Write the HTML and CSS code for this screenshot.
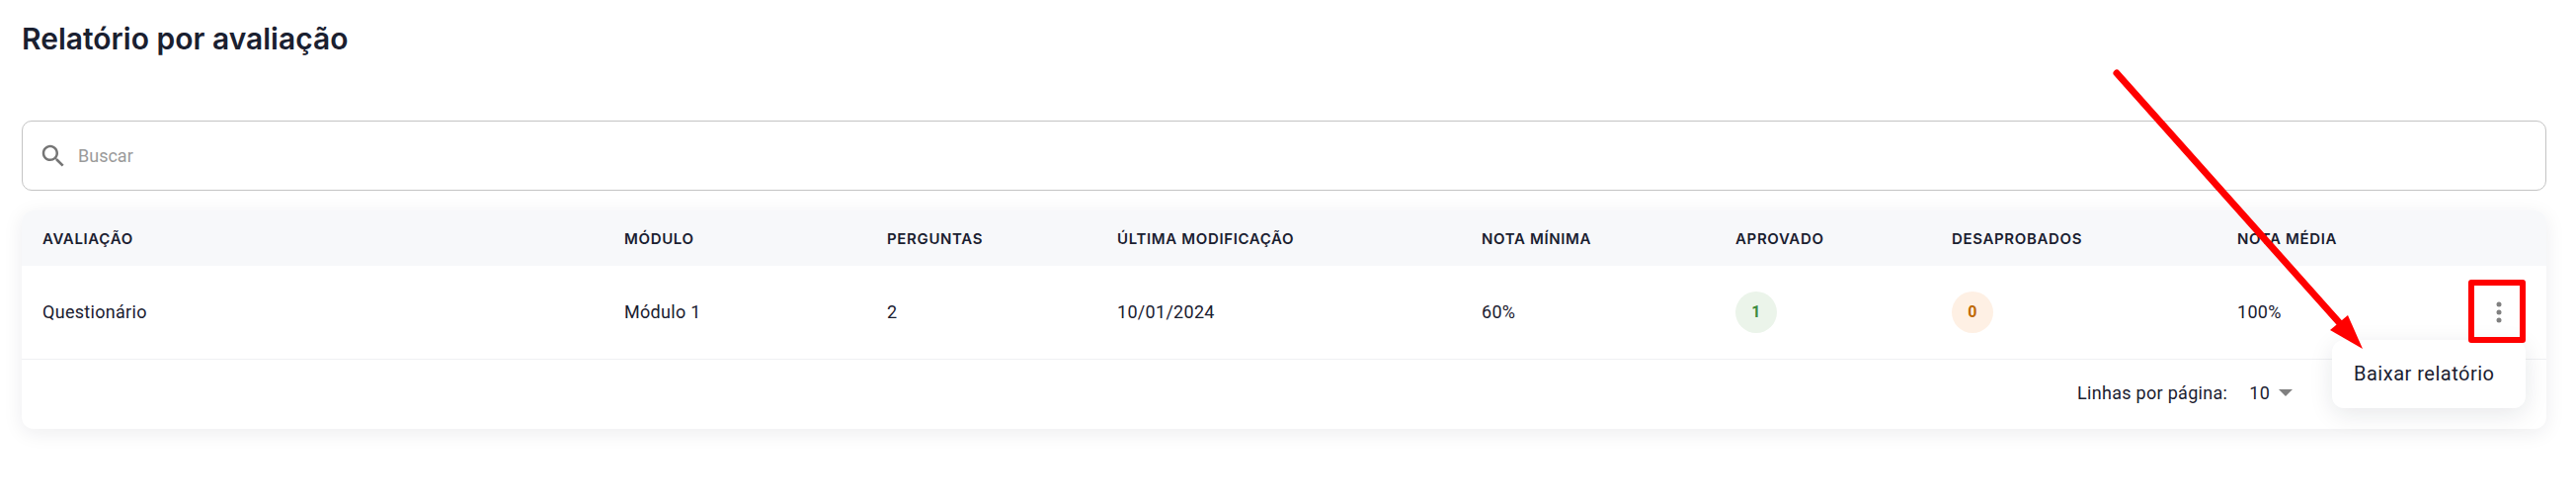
FILE: index.html
```html
<!DOCTYPE html>
<html lang="pt-br">
<head>
    <meta charset="UTF-8">
    <meta name="viewport" content="width=device-width, initial-scale=1.0">
    <title>Relatório por avaliação</title>
    <link rel="stylesheet" href="styles.css">
</head>
<body>
    <main class="pagina">
        <h1 class="titulo">Relatório por avaliação</h1>

        <div class="busca">
            <svg class="iconeBusca" viewBox="0 0 24 24"><path d="M15.5 14h-.79l-.28-.27C15.41 12.59 16 11.11 16 9.5 16 5.91 13.09 3 9.5 3S3 5.91 3 9.5 5.91 16 9.5 16c1.61 0 3.09-.59 4.23-1.57l.27.28v.79l5 4.99L20.49 19l-4.99-5zm-6 0C7.01 14 5 11.99 5 9.5S7.01 5 9.5 5 14 7.01 14 9.5 11.99 14 9.5 14z"/></svg>
            <span>Buscar</span>
        </div>

        <section class="cartao">
            <table>
                <colgroup>
                    <col class="colAvaliacao">
                    <col class="colModulo">
                    <col class="colPerguntas">
                    <col class="colData">
                    <col class="colMinima">
                    <col class="colAprovado">
                    <col class="colDesaprovado">
                    <col class="colMedia">
                    <col>
                </colgroup>
                <thead>
                    <tr>
                        <th>Avaliação</th>
                        <th>Módulo</th>
                        <th>Perguntas</th>
                        <th>Última modificação</th>
                        <th>Nota mínima</th>
                        <th>Aprovado</th>
                        <th>Desaprobados</th>
                        <th>Nota média</th>
                        <th></th>
                    </tr>
                </thead>
                <tbody>
                    <tr>
                        <td>Questionário</td>
                        <td>Módulo 1</td>
                        <td>2</td>
                        <td>10/01/2024</td>
                        <td>60%</td>
                        <td><span class="selo seloVerde">1</span></td>
                        <td><span class="selo seloLaranja">0</span></td>
                        <td>100%</td>
                        <td>
                            <svg class="iconeMais" viewBox="0 0 6 22"><circle cx="3" cy="3" r="2.5"/><circle cx="3" cy="11" r="2.5"/><circle cx="3" cy="19" r="2.5"/></svg>
                        </td>
                    </tr>
                </tbody>
            </table>

            <footer class="rodape">
                <span>Linhas por página:</span>
                <span class="linhas">10</span>
                <span class="seta"></span>
            </footer>
        </section>
    </main>

    <div class="menu">Baixar relatório</div>
    <div class="destaque"></div>

    <svg class="anotacao" viewBox="0 0 2608 508">
        <line x1="2143" y1="74" x2="2375" y2="334" stroke="#ff0000" stroke-width="7" stroke-linecap="round"/>
        <polygon points="2392,353 2359,334 2377,319" fill="#ff0000"/>
    </svg>
</body>
</html>
```

FILE: styles.css
```css
* {
    box-sizing: border-box;
}

html, body {
    margin: 0;
    height: 508px;
    overflow: hidden;
    background-color: white;
}

body {
    position: relative;
    font-family: Roboto, Arial, sans-serif;
    color: #1a2030;
}

.pagina {
    padding: 18px 30px 0 22px;
}

.titulo {
    margin: 0 0 62px;
    font-family: Inter, Roboto, sans-serif;
    font-size: 30px;
    line-height: 42px;
    font-weight: 600;
}

.busca {
    display: flex;
    align-items: center;
    height: 71px;
    padding-left: 16px;
    border: 1px solid #c4c4c4;
    border-radius: 10px;
    font-size: 18px;
    color: #9a9a9a;
}

.iconeBusca {
    width: 30px;
    height: 30px;
    margin-right: 10px;
    fill: #757575;
}

.cartao {
    margin-top: 20px;
    height: 221px;
    border-radius: 12px;
    background-color: white;
    box-shadow: 0 4px 20px rgba(22, 28, 45, 0.08);
    overflow: hidden;
}

table {
    width: 100%;
    border-collapse: collapse;
    table-layout: fixed;
}

.colAvaliacao { width: 589px; }
.colModulo { width: 266px; }
.colPerguntas { width: 233px; }
.colData { width: 369px; }
.colMinima { width: 257px; }
.colAprovado { width: 219px; }
.colDesaprovado { width: 289px; }
.colMedia { width: 200px; }

th {
    height: 56px;
    padding: 0 0 0 21px;
    text-align: left;
    background-color: #f7f8fa;
    font-family: Inter, Roboto, sans-serif;
    font-size: 15px;
    font-weight: 600;
    letter-spacing: 0.65px;
    text-transform: uppercase;
}

td {
    height: 94px;
    padding: 0 0 0 21px;
    border-bottom: 1px solid #eff0f3;
    font-size: 18px;
    letter-spacing: 0.3px;
}

.selo {
    display: flex;
    align-items: center;
    justify-content: center;
    width: 42px;
    height: 42px;
    border-radius: 50%;
    font-size: 16px;
    font-weight: 700;
}

.seloVerde {
    background-color: #ebf4ea;
    color: #3d8b40;
}

.seloLaranja {
    background-color: #fef0e4;
    color: #bf6900;
}

.iconeMais {
    display: block;
    width: 6px;
    height: 22px;
    margin-left: 62px;
    fill: #808080;
}

.rodape {
    display: flex;
    align-items: center;
    height: 67px;
    padding-left: 2081px;
    font-size: 18px;
    letter-spacing: 0.3px;
}

.linhas {
    margin-left: 22px;
}

.seta {
    margin-left: 9px;
    border-left: 7px solid transparent;
    border-right: 7px solid transparent;
    border-top: 7px solid #808080;
}

.menu {
    position: absolute;
    left: 2361px;
    top: 344px;
    width: 196px;
    height: 69px;
    padding-left: 22px;
    border-radius: 12px;
    background-color: white;
    box-shadow: 0 6px 24px rgba(22, 28, 45, 0.1);
    font-size: 20px;
    letter-spacing: 0.5px;
    line-height: 69px;
}

.destaque {
    position: absolute;
    left: 2499px;
    top: 283px;
    width: 58px;
    height: 64px;
    border: 6px solid #ff0000;
    border-radius: 3px;
}

.anotacao {
    position: absolute;
    left: 0;
    top: 0;
    width: 2608px;
    height: 508px;
}
```
